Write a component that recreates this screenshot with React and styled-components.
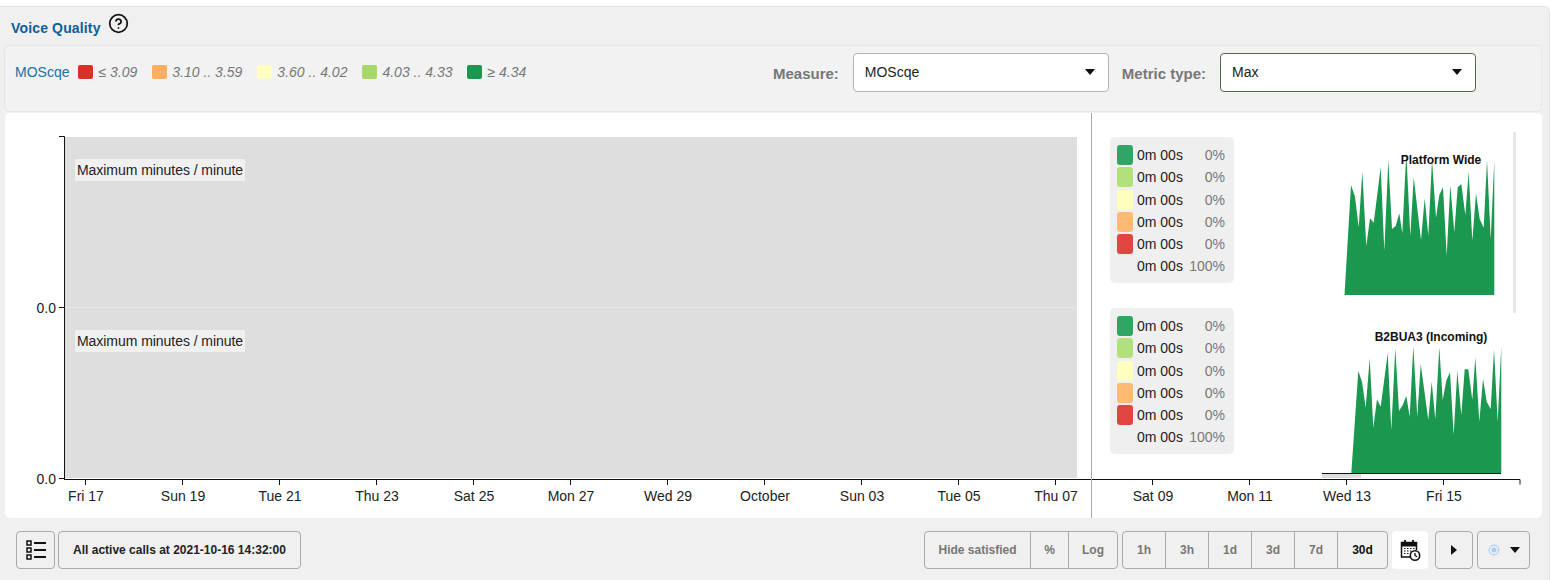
import React from 'react';
import styled, { createGlobalStyle } from 'styled-components';
import { CircleHelp } from 'lucide-react';

const GlobalStyle = createGlobalStyle`
  html, body {
    margin: 0;
    height: 100%;
    overflow: hidden;
    background: #fff;
    font-family: "Liberation Sans", Arial, sans-serif;
    font-size: 14px;
    color: #222;
  }
`;

const Panel = styled.div`
  box-sizing: border-box;
  width: 1550px;
  height: calc(100vh - 6px);
  margin-top: 6px;
  padding: 0 7px 0 4px;
  background: #f0f0f0;
  border-top: 1px solid #e4e4e4;
  border-right: 1px solid #e4e4e4;
  border-top-right-radius: 6px;
`;

const Header = styled.div`
  display: flex;
  align-items: flex-start;
  height: 38px;
  padding-left: 7px;
`;

const Title = styled.span`
  margin-top: 13px;
  font-size: 14px;
  line-height: 16px;
  font-weight: 700;
  letter-spacing: 0.15px;
  color: #0b5f9e;
`;

const HelpIcon = styled(CircleHelp)`
  margin: 6px 0 0 7px;
  color: #111;
`;

const FilterBar = styled.div`
  box-sizing: border-box;
  display: flex;
  align-items: center;
  height: 67px;
  padding: 7px 65px 19px 10px;
  background: #f2f2f2;
  border: 1px solid #e6e6e6;
  border-radius: 5px;
`;

const LegendName = styled.span`
  margin: 0 9px 2px 0;
  color: #21709f;
`;

const LegendItem = styled.span`
  display: flex;
  align-items: center;
  gap: 5px;
  margin: 0 15px 2px 0;
  font-style: italic;
  color: #777;
`;

const LegendSwatch = styled.i`
  width: 15px;
  height: 14px;
  border-radius: 2px;
  background: ${(p) => p.$color};
`;

const Selectors = styled.div`
  display: flex;
  align-items: center;
  margin-left: auto;
`;

const FieldLabel = styled.span`
  margin: 2px 14px 0 13px;
  font-size: 15px;
  font-weight: 700;
  color: #777;
`;

const Select = styled.div`
  box-sizing: border-box;
  display: flex;
  align-items: center;
  justify-content: space-between;
  width: 256px;
  height: 39px;
  padding: 0 13px 2px 11px;
  background: #fff;
  border: 1px solid ${(p) => (p.$focused ? '#566b4d' : '#b4b4b4')};
  border-radius: 4px;
  color: #222;
`;

const Caret = styled.i`
  width: 0;
  height: 0;
  border-left: 5px solid transparent;
  border-right: 5px solid transparent;
  border-top: 6px solid #111;
`;

const MenuCaret = styled(Caret)`
  margin-left: 10px;
`;

const ChartCard = styled.div`
  position: relative;
  height: 405px;
  margin: 1px 0 0 1px;
  background: #fff;
  border-radius: 5px;
`;

const MainChart = styled.svg`
  display: block;
  font-family: "Liberation Sans", Arial, sans-serif;
  font-size: 14px;
  fill: #222;
`;

const ChartNote = styled.span`
  position: absolute;
  left: 70px;
  top: ${(p) => p.$top}px;
  width: 170px;
  padding-left: 2px;
  box-sizing: border-box;
  white-space: nowrap;
  letter-spacing: -0.05px;
  line-height: 22px;
  background: #f0f0f0;
  color: #222;
`;

const SidePane = styled.div`
  position: absolute;
  left: 1086px;
  top: 0;
  bottom: 0;
  right: 0;
  padding: 24px 0 0 18px;
  border-left: 1px solid #aaa;
`;

const SummaryRow = styled.div`
  display: flex;
  align-items: flex-start;
  height: 171px;
`;

const StatCard = styled.div`
  box-sizing: border-box;
  flex: none;
  width: 124px;
  height: 146px;
  padding: 7px 9px 0 7px;
  background: #efefef;
  border-radius: 5px;
`;

const StatRow = styled.div`
  display: flex;
  align-items: flex-start;
  height: 22.3px;
  line-height: 22px;
`;

const StatSwatch = styled.i`
  flex: none;
  width: 16px;
  height: 20px;
  margin: 1px 4px 0 0;
  border-radius: 3px;
  background: ${(p) => p.$color || 'transparent'};
`;

const StatPercent = styled.span`
  margin-left: auto;
  color: #777;
`;

const MiniChart = styled.svg`
  flex: none;
  margin: -5px 0 0 88px;
  overflow: visible;
  font-family: "Liberation Sans", Arial, sans-serif;
  font-size: 12px;
  font-weight: 700;
`;

const Footer = styled.div`
  display: flex;
  align-items: stretch;
  height: 38px;
  margin-top: 13px;
  padding: 0 12px;
`;

const Button = styled.button`
  box-sizing: border-box;
  display: flex;
  align-items: center;
  justify-content: center;
  width: ${(p) => p.$width}px;
  margin-right: ${(p) => p.$gap || 0}px;
  padding: 0;
  background: #f0f0f0;
  border: 1px solid #aaa;
  border-radius: 4px;
  font: 700 12px "Liberation Sans", Arial, sans-serif;
  color: #222;
`;

const ButtonGroup = styled.div`
  display: flex;
  margin-right: 4px;
  margin-left: ${(p) => (p.$push ? 'auto' : 0)};
  background: #f0f0f0;
  border: 1px solid #aaa;
  border-radius: 4px;
`;

const GroupItem = styled.span`
  box-sizing: border-box;
  display: flex;
  align-items: center;
  justify-content: center;
  width: ${(p) => p.$width}px;
  font-size: 12px;
  font-weight: 700;
  color: ${(p) => (p.$active ? '#111' : '#777')};
  border-left: ${(p) => (p.$first ? 'none' : '1px solid #aaa')};
`;

const CalendarButton = styled.div`
  display: flex;
  align-items: center;
  justify-content: center;
  width: 36px;
  margin-right: 7px;
  background: #fff;
  border-radius: 4px;
`;

const legend = [
  ['#d73027', '≤ 3.09'],
  ['#fdae61', '3.10 .. 3.59'],
  ['#ffffbf', '3.60 .. 4.02'],
  ['#a6d96a', '4.03 .. 4.33'],
  ['#1a9850', '≥ 4.34'],
];

const statColors = ['#32a463', '#b2e07c', '#ffffc0', '#feb973', '#e0453f', null];

const ticks = [
  'Fri 17', 'Sun 19', 'Tue 21', 'Thu 23', 'Sat 25', 'Mon 27', 'Wed 29', 'October',
  'Sun 03', 'Tue 05', 'Thu 07', 'Sat 09', 'Mon 11', 'Wed 13', 'Fri 15',
];

// traced from the reference, in 3x crop coordinates
const platformShape = [
  [33, 105], [45, 140], [56, 232], [67, 65], [79, 288], [90, 205], [101, 218], [122, 52],
  [133, 302], [145, 30], [156, 237], [167, 228], [178, 190], [187, 250], [199, 8], [211, 258],
  [221, 82], [243, 270], [254, 145], [265, 257], [276, 30], [288, 203], [298, 135], [309, 112],
  [320, 317], [331, 105], [343, 247], [353, 112], [364, 102], [376, 195], [386, 65], [397, 272],
  [408, 130], [419, 207], [431, 233], [441, 30], [452, 268], [463, 30],
];

const b2buaShape = [
  [145, 93], [156, 125], [167, 203], [179, 55], [190, 263], [201, 178], [212, 200], [233, 40],
  [244, 270], [256, 25], [267, 213], [278, 195], [289, 168], [299, 230], [310, 18], [322, 230],
  [332, 72], [355, 240], [365, 125], [376, 238], [388, 22], [398, 180], [409, 122], [420, 97],
  [431, 285], [442, 92], [454, 225], [464, 88], [475, 88], [487, 180], [496, 52], [508, 245],
  [519, 117], [530, 185], [542, 207], [552, 28], [563, 245], [574, 18],
];

const toPoints = (shape, originX, originY, startX, endX, baseY) =>
  [
    [startX, baseY],
    ...shape.map(([x, y]) => [originX + x / 3, originY + y / 3]),
    [endX, baseY],
  ]
    .map(([x, y]) => `${x.toFixed(1)},${y.toFixed(1)}`)
    .join(' ');

const Stats = () => (
  <StatCard>
    {statColors.map((color, i) => (
      <StatRow key={i}>
        <StatSwatch $color={color} />
        <span>0m 00s</span>
        <StatPercent>{color ? '0%' : '100%'}</StatPercent>
      </StatRow>
    ))}
  </StatCard>
);

const ListIcon = () => (
  <svg width="20" height="20" viewBox="0 0 20 20" fill="none" stroke="#111">
    <rect x="1" y="1" width="4" height="4" strokeWidth="1.5" />
    <rect x="1" y="8" width="4" height="4" strokeWidth="1.5" />
    <rect x="1" y="15" width="4" height="4" strokeWidth="1.5" />
    <path d="M8 3h12M8 10h12M8 17h12" strokeWidth="2" />
  </svg>
);

const CalendarIcon = () => (
  <svg width="22" height="22" viewBox="0 0 22 22" fill="none" stroke="#111">
    <path d="M12 18H2.500V3.500h15V11" strokeWidth="1.500" />
    <path d="M2.500 4h15v3h-15z" fill="#111" strokeWidth="1" />
    <path d="M6 1v4M14 1v4" strokeWidth="1.800" />
    <path
      d="M5 9.500h1.500M8 9.500h1.500M11 9.500h1.500M14 9.500h1.500M5 12h1.500M8 12h1.500M11 12h1.500M5 14.500h1.500M8 14.500h1.500"
      strokeWidth="1.200"
    />
    <circle cx="16" cy="16.500" r="4.700" fill="#fff" strokeWidth="1.600" />
    <path d="M16 14v2.500l2 1.300" strokeWidth="1.300" />
  </svg>
);

const PlayIcon = () => (
  <svg width="8" height="12" viewBox="0 0 8 12">
    <path d="M1 1l6 5-6 5z" fill="#111" />
  </svg>
);

const RingIcon = () => (
  <svg width="12" height="14" viewBox="0 0 12 14" fill="none">
    <circle cx="6" cy="7" r="4.700" stroke="#b5d5f5" strokeWidth="1.500" />
    <circle cx="6" cy="7" r="2.500" fill="#a5cdf0" />
  </svg>
);

const App = () => (
  <>
    <GlobalStyle />
    <Panel>
      <Header>
        <Title>Voice Quality</Title>
        <HelpIcon size={21} strokeWidth={2} />
      </Header>

      <FilterBar>
        <LegendName>MOScqe</LegendName>
        {legend.map(([color, label]) => (
          <LegendItem key={label}>
            <LegendSwatch $color={color} />
            {label}
          </LegendItem>
        ))}
        <Selectors>
          <FieldLabel>Measure:</FieldLabel>
          <Select>
            MOScqe
            <Caret />
          </Select>
          <FieldLabel>Metric type:</FieldLabel>
          <Select $focused>
            Max
            <Caret />
          </Select>
        </Selectors>
      </FilterBar>

      <ChartCard>
        <MainChart width="1537" height="405" viewBox="5 113 1537 405">
          <rect x="65" y="137" width="1012" height="341" fill="#dedede" />
          <path d="M65 307.500h1012" stroke="#e6e6e6" />
          <path d="M59 136.500h5.500V479M59 307.500h5M59 478.500h5" fill="none" stroke="#111" />
          <path d="M64 479.500h1456v5" fill="none" stroke="#111" />
          <text x="56" y="313" textAnchor="end">0.0</text>
          <text x="56" y="484" textAnchor="end">0.0</text>
          {ticks.map((label, i) => (
            <g key={label}>
              <path d={`M${85.5 + i * 97} 480v5`} stroke="#111" />
              <text x={86 + i * 97} y="501" textAnchor="middle">{label}</text>
            </g>
          ))}
        </MainChart>

        <ChartNote $top={46}>Maximum minutes / minute</ChartNote>
        <ChartNote $top={217}>Maximum minutes / minute</ChartNote>

        <SidePane>
          <SummaryRow>
            <Stats />
            <MiniChart width="200" height="181" viewBox="1322 132 200 181">
              <polygon
                points={toPoints(platformShape, 1340, 150, 1344.5, 1494.3, 295)}
                fill="#1b9850"
              />
              <rect x="1513" y="132" width="3" height="181" fill="#e8e8e8" />
              <text x="1441" y="164" textAnchor="middle" fill="#111">Platform Wide</text>
            </MiniChart>
          </SummaryRow>
          <SummaryRow>
            <Stats />
            <MiniChart width="200" height="181" viewBox="1322 303 200 181">
              <rect x="1322" y="474" width="39" height="4" fill="#ddd" />
              <polygon
                points={toPoints(b2buaShape, 1310, 340, 1351.3, 1501.3, 473)}
                fill="#1b9850"
              />
              <path d="M1322 473.500h179" stroke="#111" />
              <text x="1431" y="341" textAnchor="middle" fill="#111">B2BUA3 (Incoming)</text>
            </MiniChart>
          </SummaryRow>
        </SidePane>
      </ChartCard>

      <Footer>
        <Button $width={39} $gap={3}><ListIcon /></Button>
        <Button $width={243}>All active calls at 2021-10-16 14:32:00</Button>

        <ButtonGroup $push>
          <GroupItem $first $width={105}>Hide satisfied</GroupItem>
          <GroupItem $width={38}>%</GroupItem>
          <GroupItem $width={49}>Log</GroupItem>
        </ButtonGroup>
        <ButtonGroup>
          <GroupItem $first $width={42}>1h</GroupItem>
          <GroupItem $width={43}>3h</GroupItem>
          <GroupItem $width={43}>1d</GroupItem>
          <GroupItem $width={43}>3d</GroupItem>
          <GroupItem $width={43}>7d</GroupItem>
          <GroupItem $active $width={50}>30d</GroupItem>
        </ButtonGroup>
        <CalendarButton><CalendarIcon /></CalendarButton>
        <Button $width={38} $gap={4}><PlayIcon /></Button>
        <Button $width={53}>
          <RingIcon />
          <MenuCaret />
        </Button>
      </Footer>
    </Panel>
  </>
);

export default App;
